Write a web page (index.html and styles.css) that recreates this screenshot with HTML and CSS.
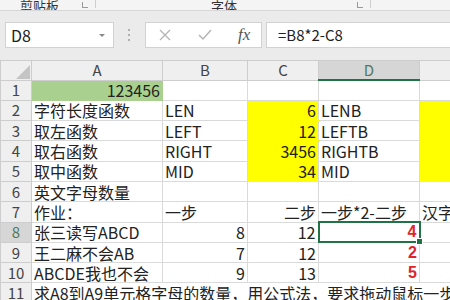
FILE: index.html
```html
<!DOCTYPE html>
<html lang="zh-CN">
<head>
  <meta charset="UTF-8">
  <title>函数练习</title>
  <link rel="stylesheet" href="styles.css">
</head>
<body>
  <div class="ribbon">
    <div class="group group-clip">
      <span class="group-label">剪贴板</span>
      <span class="launcher"></span>
    </div>
    <div class="group group-font">
      <span class="group-label">字体</span>
      <span class="launcher"></span>
    </div>
  </div>

  <div class="formula-bar">
    <div class="name-box">
      <span>D8</span>
      <span class="caret"></span>
    </div>
    <div class="grip"><i></i><i></i><i></i></div>
    <div class="fx-box">
      <svg class="icon" width="12" height="12" viewBox="0 0 12 12">
        <path d="M1 1 L11 11 M11 1 L1 11" stroke="#b4b4b4" stroke-width="1.3" fill="none"/>
      </svg>
      <svg class="icon" width="14" height="12" viewBox="0 0 14 12">
        <path d="M1 6 L5 10 L13 1" stroke="#b4b4b4" stroke-width="1.5" fill="none"/>
      </svg>
      <span class="fx">fx</span>
    </div>
    <div class="formula-input">=B8*2-C8</div>
  </div>

  <table class="sheet">
    <colgroup>
      <col class="col-head">
      <col class="col-a">
      <col class="col-b">
      <col class="col-c">
      <col class="col-d">
      <col class="col-e">
    </colgroup>
    <tr class="head-row">
      <th class="corner">
        <svg width="14" height="14" viewBox="0 0 14 14"><path d="M14 0 L14 14 L0 14 Z" fill="#c4c4c4"/></svg>
      </th>
      <th>A</th>
      <th>B</th>
      <th>C</th>
      <th class="active">D</th>
      <th></th>
    </tr>
    <tr>
      <th>1</th>
      <td class="num green">123456</td>
      <td></td>
      <td></td>
      <td></td>
      <td></td>
    </tr>
    <tr>
      <th>2</th>
      <td>字符长度函数</td>
      <td>LEN</td>
      <td class="num yellow">6</td>
      <td>LENB</td>
      <td class="yellow"></td>
    </tr>
    <tr>
      <th>3</th>
      <td>取左函数</td>
      <td>LEFT</td>
      <td class="num yellow">12</td>
      <td>LEFTB</td>
      <td class="yellow"></td>
    </tr>
    <tr>
      <th>4</th>
      <td>取右函数</td>
      <td>RIGHT</td>
      <td class="num yellow">3456</td>
      <td>RIGHTB</td>
      <td class="yellow"></td>
    </tr>
    <tr>
      <th>5</th>
      <td>取中函数</td>
      <td>MID</td>
      <td class="num yellow">34</td>
      <td>MID</td>
      <td class="yellow"></td>
    </tr>
    <tr>
      <th>6</th>
      <td>英文字母数量</td>
      <td></td>
      <td></td>
      <td></td>
      <td></td>
    </tr>
    <tr>
      <th>7</th>
      <td>作业：</td>
      <td>一步</td>
      <td class="num">二步</td>
      <td>一步*2-二步</td>
      <td>汉字</td>
    </tr>
    <tr>
      <th class="active">8</th>
      <td>张三读写ABCD</td>
      <td class="num">8</td>
      <td class="num">12</td>
      <td class="num red selected">4<span class="handle"></span></td>
      <td></td>
    </tr>
    <tr>
      <th>9</th>
      <td>王二麻不会AB</td>
      <td class="num">7</td>
      <td class="num">12</td>
      <td class="num red">2</td>
      <td></td>
    </tr>
    <tr>
      <th>10</th>
      <td>ABCDE我也不会</td>
      <td class="num">9</td>
      <td class="num">13</td>
      <td class="num red">5</td>
      <td></td>
    </tr>
    <tr>
      <th>11</th>
      <td class="spill">求A8到A9单元格字母的数量，用公式法，要求拖动鼠标一步完成</td>
      <td class="open"></td>
      <td class="open"></td>
      <td class="open"></td>
      <td class="open"></td>
    </tr>
  </table>
</body>
</html>
```

FILE: styles.css
```css
/* Page */
body {
  margin: 0;
  width: 450px;
  height: 300px;
  overflow: hidden;
  background: #ffffff;
  font-family: "Noto Sans CJK SC", "Liberation Sans", sans-serif;
  color: #222;
}

/* Ribbon strip, only the bottom of the labels shows */
.ribbon {
  display: flex;
  height: 10px;
  background: #f4f4f4;
  border-bottom: 1px solid #d6d6d6;
  overflow: hidden;
}

.group {
  display: flex;
  align-items: flex-end;
  border-right: 1px solid #cfcfcf;
  height: 8px;
  box-sizing: border-box;
}

.group-clip {
  width: 96px;
  padding-left: 20px;
}

.group-font {
  width: 275px;
  padding-left: 115px;
}

.group-label {
  font-size: 13px;
  line-height: 14px;
  margin-bottom: -5px;
  color: #333;
}

.launcher {
  margin-left: auto;
  margin-right: 7px;
  width: 5px;
  height: 5px;
  border-left: 1px solid #999;
  border-bottom: 1px solid #999;
}

/* Name box and formula input */
.formula-bar {
  display: flex;
  align-items: flex-start;
  height: 49px;
  box-sizing: border-box;
  padding: 11px 0 0 5px;
  background: #ebebeb;
}

.name-box {
  display: flex;
  align-items: center;
  width: 109px;
  height: 26px;
  box-sizing: border-box;
  padding: 0 0 0 5px;
  background: #fff;
  border: 1px solid #d2d2d2;
  font-size: 16px;
}

.caret {
  margin-left: auto;
  margin-right: 8px;
  border-left: 3px solid transparent;
  border-right: 3px solid transparent;
  border-top: 3px solid #888;
}

.grip {
  display: flex;
  flex-direction: column;
  gap: 3px;
  margin: 7px 15px 0 14px;
}

.grip i {
  display: block;
  width: 2px;
  height: 2px;
  background: #b0b0b0;
}

.fx-box {
  display: flex;
  align-items: center;
  width: 117px;
  height: 26px;
  box-sizing: border-box;
  padding-left: 13px;
  background: #fff;
  border: 1px solid #d2d2d2;
}

.fx-box .icon {
  margin-right: 27px;
}

.fx-box .icon + .icon {
  margin-right: 26px;
}

.fx {
  font-family: "Liberation Serif", serif;
  font-style: italic;
  font-size: 17px;
  color: #555;
}

.formula-input {
  flex: 1;
  height: 26px;
  box-sizing: border-box;
  margin-left: 4px;
  padding-left: 11px;
  background: #fff;
  border: 1px solid #d2d2d2;
  border-right: none;
  font-size: 15px;
  line-height: 24px;
}

/* Worksheet grid */
.sheet {
  table-layout: fixed;
  border-collapse: collapse;
  width: 480px;
  font-size: 16px;
}

.col-head { width: 31px; }
.col-a { width: 131px; }
.col-b { width: 85px; }
.col-c { width: 71px; }
.col-d { width: 101px; }
.col-e { width: 61px; }

.sheet tr {
  height: 20.3px;
}

.sheet .head-row {
  height: 19px;
}

.sheet th,
.sheet td {
  padding: 0 2px;
  line-height: 18px;
  white-space: nowrap;
  overflow: visible;
  border: 1px solid #dadada;
}

.sheet th {
  font-weight: normal;
  color: #444;
  background: #efefef;
  border-color: #cdcdcd;
  text-align: center;
  font-size: 15px;
  padding: 0;
}

.sheet th.corner {
  text-align: right;
  vertical-align: bottom;
  padding: 0 1px 1px 0;
}

.sheet th.corner svg {
  display: block;
  margin-left: auto;
}

.sheet th.active {
  background: #d6d6d6;
  color: #4f7a5f;
}

.head-row th.active {
  border-bottom: 2px solid #217346;
}

.sheet td.num {
  text-align: right;
}

.sheet td.green {
  background: #a9d08e;
  border-color: #a9d08e;
}

.sheet td.yellow {
  background: #ffff00;
  border-top-color: #ffff00;
  border-bottom-color: #ffff00;
}

.sheet td.red {
  color: #e0242c;
  font-weight: bold;
  font-family: "Liberation Sans", sans-serif;
}

.sheet td.selected {
  position: relative;
  border: 2px solid #217346;
}

.handle {
  position: absolute;
  right: -4px;
  bottom: -4px;
  width: 5px;
  height: 5px;
  background: #217346;
  border: 1px solid #fff;
}

.sheet td.spill {
  border-right-color: transparent;
}

.sheet td.open {
  border-left-color: transparent;
  border-right-color: transparent;
}
```
